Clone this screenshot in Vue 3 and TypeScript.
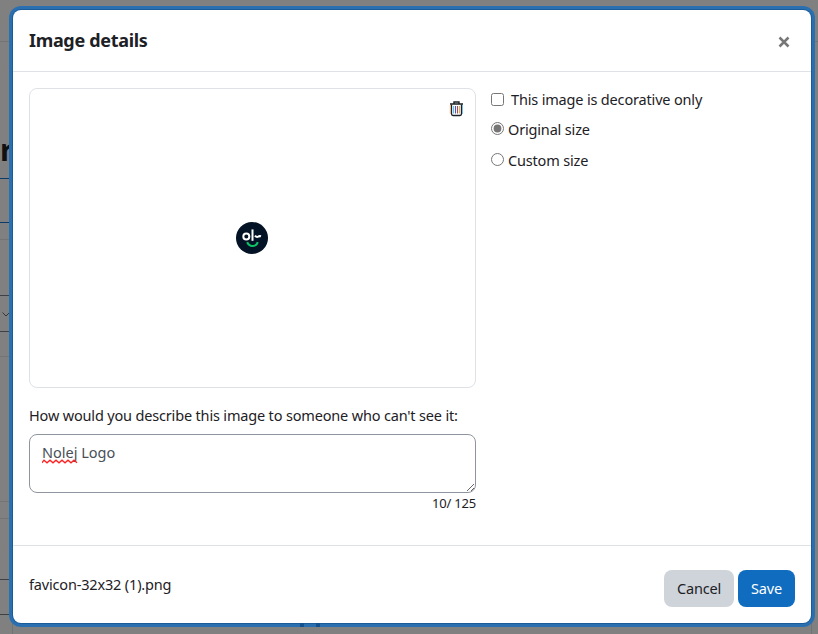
<script setup lang="ts">
import { ref, computed } from 'vue'

const altWords = ref<[string, string]>(['Nolej', ' Logo'])
const maxLength = 125
const altLength = computed(() => altWords.value.join('').length)
const decorative = ref(false)
const size = ref<'original' | 'custom'>('original')
</script>

<template>
  <div class="page">
    <svg class="behind" width="818" height="634" viewBox="0 0 818 634" shape-rendering="crispEdges">
      <path d="M0 41.5H818M0 239.5H12M0 356.5H12M0 501.5H12M0 518.5H12" stroke="#727475" />
      <path d="M0 178.5H12M0 222.5H12" stroke="#0a3b69" />
      <path d="M0 295.5H12M0 331.5H12M0 579.5H12M0 614.5H12" stroke="#3d4044" />
      <path d="M12.5 620V634M811.5 620V634" stroke="#707274" />
      <path d="M2.5 312.5L6 316L9.5 312.5" fill="none" stroke="#34373a" shape-rendering="auto" />
    </svg>
    <span class="behind-title">r</span>

    <section class="dialog" role="dialog">
      <header class="header">
        <h5 class="title">Image details</h5>
        <button class="close" type="button">
          <svg width="12" height="12" viewBox="0 0 12 12">
            <path d="M1.5 1.5L10.5 10.5M10.5 1.5L1.5 10.5" stroke="#777" stroke-width="2.5" />
          </svg>
        </button>
      </header>

      <main class="body">
        <div class="left">
          <div class="preview">
            <svg class="logo" width="32" height="32" viewBox="0 0 32 32">
              <circle cx="16" cy="16" r="16" fill="#031224" />
              <circle cx="10.3" cy="14.6" r="3" fill="none" stroke="#fff" stroke-width="2" />
              <path d="M16.5 7.4V18.8" stroke="#fff" stroke-width="2" />
              <path d="M19 13.6Q20.6 15.6 22.1 14.7Q23.5 13.8 25 14.3" fill="none" stroke="#fff" stroke-width="2" />
              <path d="M11.2 20.2C13 25.2 20 25.2 21.8 20.2" fill="none" stroke="#0cc368" stroke-width="2" />
            </svg>
            <button class="trash" type="button">
              <svg width="14" height="16" viewBox="0 0 14 16" fill="none">
                <path d="M5 2.5V1H10V2.5M1 3H14" stroke="#1d2125" stroke-width="1.4" />
                <path d="M2.5 3.5V12.8Q2.5 14.5 4 14.5H11Q12.5 14.5 12.5 12.8V3.5" stroke="#1d2125" stroke-width="1.3" />
                <path d="M1.3 4V13" stroke="#f2a65a" stroke-width="0.8" />
                <path d="M13.5 4V13" stroke="#58b5ee" stroke-width="0.8" />
                <path d="M4.5 5V12.5" stroke="#55bdf0" stroke-width="1.1" />
                <path d="M6.5 5V12.5" stroke="#4857c0" stroke-width="1.1" />
                <path d="M8.5 5V12.5" stroke="#98536b" stroke-width="1.1" />
                <path d="M10.5 5V12.5" stroke="#f5a64f" stroke-width="1.1" />
              </svg>
            </button>
          </div>
          <label class="label">How would you describe this image to someone who can't see it:</label>
          <div class="textbox" role="textbox">
            <span class="misspelt">{{ altWords[0] }}<svg class="squiggle" width="36" height="5" viewBox="0 0 36 5">
              <path d="M0 3.8L2 1.2L5 3.8L8 1.2L11 3.8L14 1.2L17 3.8L20 1.2L23 3.8L26 1.2L29 3.8L32 1.2L35 3.8" fill="none" stroke="#f22" stroke-width="1.3" />
            </svg></span>{{ altWords[1] }}
            <svg class="grip" width="9" height="9" viewBox="0 0 9 9">
              <path d="M1 8L8 1M5 8L8 5" stroke="#555" stroke-width="0.9" />
            </svg>
          </div>
          <div class="counter">{{ altLength }}/ {{ maxLength }}</div>
        </div>

        <div class="options">
          <label class="option check"><input v-model="decorative" type="checkbox" /><span>This image is decorative only</span></label>
          <label class="option"><input v-model="size" type="radio" value="original" /><span>Original size</span></label>
          <label class="option"><input v-model="size" type="radio" value="custom" /><span>Custom size</span></label>
        </div>
      </main>

      <footer class="footer">
        <span class="filename">favicon-32x32 (1).png</span>
        <div class="actions">
          <button class="btn cancel" type="button">Cancel</button>
          <button class="btn save" type="button">Save</button>
        </div>
      </footer>
    </section>
    <svg class="ring-marks" width="20" height="4" viewBox="0 0 20 4">
      <path d="M0 0H4V4H0ZM16 0H20V4H16Z" fill="#14528f" />
    </svg>
  </div>
</template>

<style>
body {
  margin: 0;
  overflow: hidden;
}
</style>

<style scoped>
.page {
  position: relative;
  box-sizing: border-box;
  width: 818px;
  height: 634px;
  padding: 10px 7px 11px 13px;
  background: #808080;
  color: #1d2125;
  font-family: "Noto Sans", sans-serif;
  font-size: 14.5px;
  letter-spacing: -0.17px;
  overflow: hidden;
}
.page * {
  box-sizing: border-box;
}
.behind {
  position: absolute;
  left: 0;
  top: 0;
}
.behind-title {
  position: absolute;
  left: 0;
  top: 130px;
  font-size: 30px;
  line-height: 40px;
  font-weight: 700;
  color: #0f1113;
}
.ring-marks {
  position: absolute;
  left: 300px;
  top: 623px;
}
.dialog {
  position: relative;
  display: flex;
  flex-direction: column;
  width: 798px;
  height: 613px;
  background: #fff;
  border-radius: 8px;
  box-shadow: 0 0 0 1px #1b5b98, 0 0 0 4px #2a70b1;
}
.header {
  display: flex;
  align-items: center;
  justify-content: space-between;
  height: 62px;
  padding: 0 21px 0 16px;
  border-bottom: 1px solid #dee2e6;
}
.title {
  margin: -2px 0 0;
  font-size: 18px;
  line-height: 28px;
  font-weight: 700;
  letter-spacing: -0.32px;
}
.close,
.trash {
  display: flex;
  padding: 0;
  border: 0;
  background: none;
}
.close {
  margin-top: 3px;
}
.body {
  display: flex;
  gap: 15px;
  flex: 1;
  padding: 16px;
}
.left {
  display: flex;
  flex-direction: column;
  width: 447px;
}
.preview {
  position: relative;
  display: flex;
  align-items: center;
  justify-content: center;
  height: 300px;
  padding-right: 1px;
  border: 1px solid #dee2e6;
  border-radius: 8px;
}
.trash {
  position: absolute;
  top: 12px;
  right: 12px;
}
.label {
  margin-top: 16px;
  line-height: 22px;
  white-space: nowrap;
}
.textbox {
  position: relative;
  height: 59px;
  margin-top: 8px;
  padding: 6px 12px;
  border: 1px solid #8f959e;
  border-radius: 8px;
  line-height: 23px;
  letter-spacing: 0;
  color: #495057;
}
.misspelt {
  position: relative;
}
.squiggle {
  position: absolute;
  left: 0;
  bottom: -2px;
}
.grip {
  position: absolute;
  right: 0;
  bottom: 0;
}
.counter {
  line-height: 20px;
  font-size: 13px;
  letter-spacing: -0.2px;
  text-align: right;
}
.options {
  display: flex;
  flex-direction: column;
}
.option {
  display: flex;
  align-items: center;
  gap: 4px;
  height: 22px;
  margin-top: 9px;
  line-height: 20px;
  white-space: nowrap;
}
.option.check {
  gap: 7px;
  height: 23px;
  margin: 0 0 -2px;
}
.option.check span {
  margin-top: -1px;
}
.option input {
  width: 13px;
  height: 13px;
  margin: 0;
  accent-color: #767676;
}
.option input[type="radio"] {
  margin-bottom: 2px;
}
.footer {
  display: flex;
  align-items: center;
  justify-content: space-between;
  height: 78px;
  padding: 8px 16px 0;
  border-top: 1px solid #dee2e6;
}
.filename {
  margin-top: -10px;
}
.actions {
  display: flex;
  gap: 4px;
}
.btn {
  height: 37px;
  padding: 0 0 1px;
  border: 0;
  border-radius: 8px;
  font: inherit;
  letter-spacing: inherit;
}
.cancel {
  width: 70px;
  background: #ced4da;
  color: #1d2125;
}
.save {
  width: 57px;
  background: #0f6cbf;
  color: #fff;
}
</style>
